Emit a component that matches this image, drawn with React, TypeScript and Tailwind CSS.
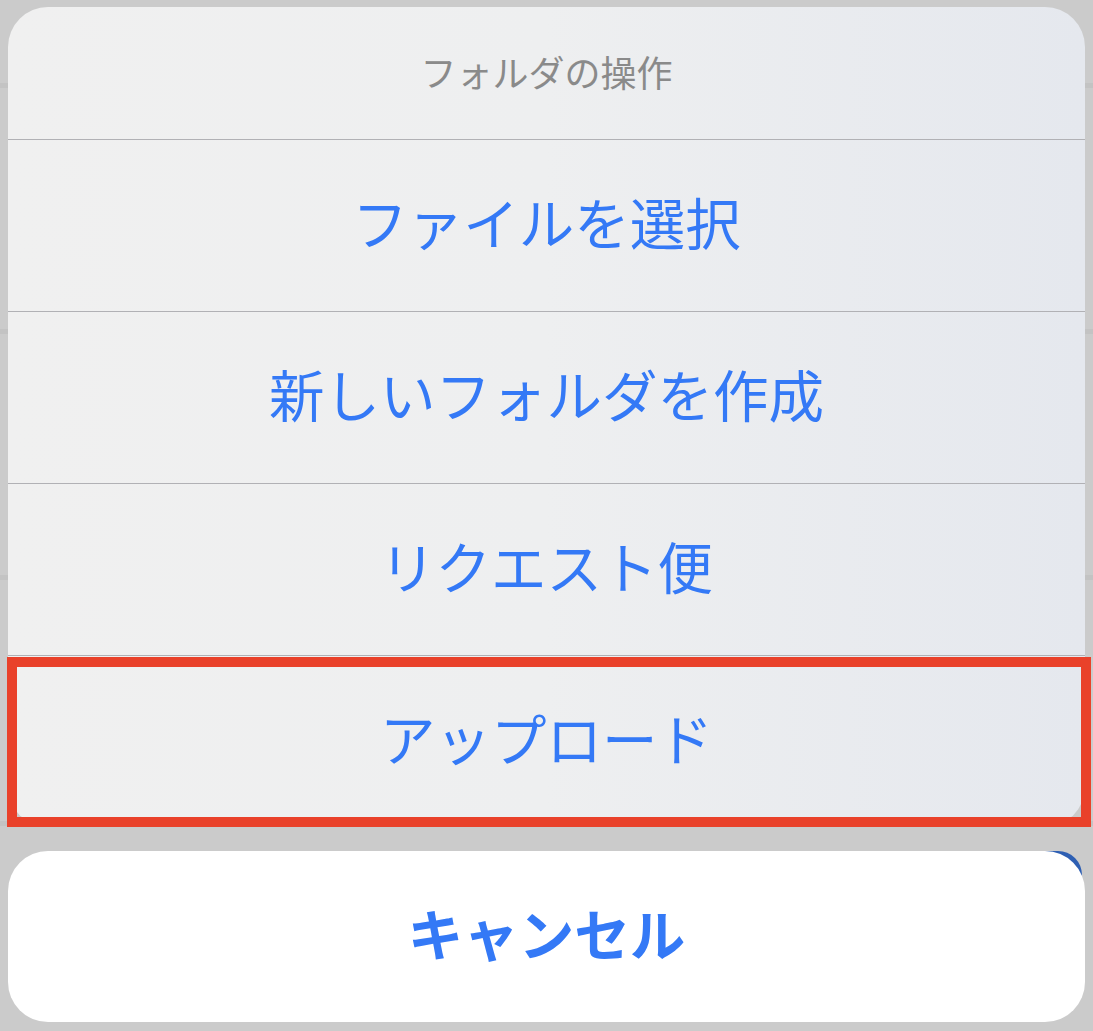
const ACTIONS = ["ファイルを選択", "新しいフォルダを作成", "リクエスト便", "アップロード"];

/** iOS action sheet over a dimmed file list, with the last action highlighted. */
export default function App() {
  return (
    <div className="relative h-[1031px] w-[1093px] overflow-hidden bg-[#cbcbcb] font-['Noto_Sans_CJK_JP','Noto_Sans',sans-serif]">
      {/* dimmed list behind the sheet */}
      <div aria-hidden className="absolute inset-0 flex flex-col pt-[83px]">
        {[0, 1, 2, 3].map((i) => (
          <div key={i} className="h-[246px] shrink-0 border-t-[5px] border-[#c3c3c3]" />
        ))}
        <div className="mt-[6px] h-px shrink-0 bg-[#a4a4a4]" />
      </div>
      <div aria-hidden className="absolute left-[900px] top-[851px] h-[60px] w-[182px] rounded-[24px] bg-[#2e5fb3]" />

      <div className="relative flex flex-col px-2 pt-[7px]">
        <div className="relative">
          <div className="flex flex-col overflow-hidden rounded-[40px] bg-gradient-to-r from-[#f0f0f0] via-[#eeeff0] to-[#e5e8ee]">
            <div className="flex h-[132px] items-center justify-center pb-[4px] text-[36px] leading-none text-[#8a8a8a]">
              フォルダの操作
            </div>
            {ACTIONS.map((a) => (
              <div
                key={a}
                className="flex h-[172px] items-center justify-center border-t border-[#b1b1b5] pb-[8px] text-[55.5px] leading-none text-[#3479f6]"
              >
                {a}
              </div>
            ))}
          </div>
          {/* highlight annotation */}
          <div className="pointer-events-none absolute -left-px -right-[6px] bottom-0 h-[170px] border-[10px] border-[#e9412a]" />
        </div>

        <button className="mt-6 flex h-[171px] items-center justify-center rounded-[40px] bg-white pb-[8px] text-[55.5px] font-bold leading-none text-[#3479f6]">
          キャンセル
        </button>
      </div>
    </div>
  );
}
